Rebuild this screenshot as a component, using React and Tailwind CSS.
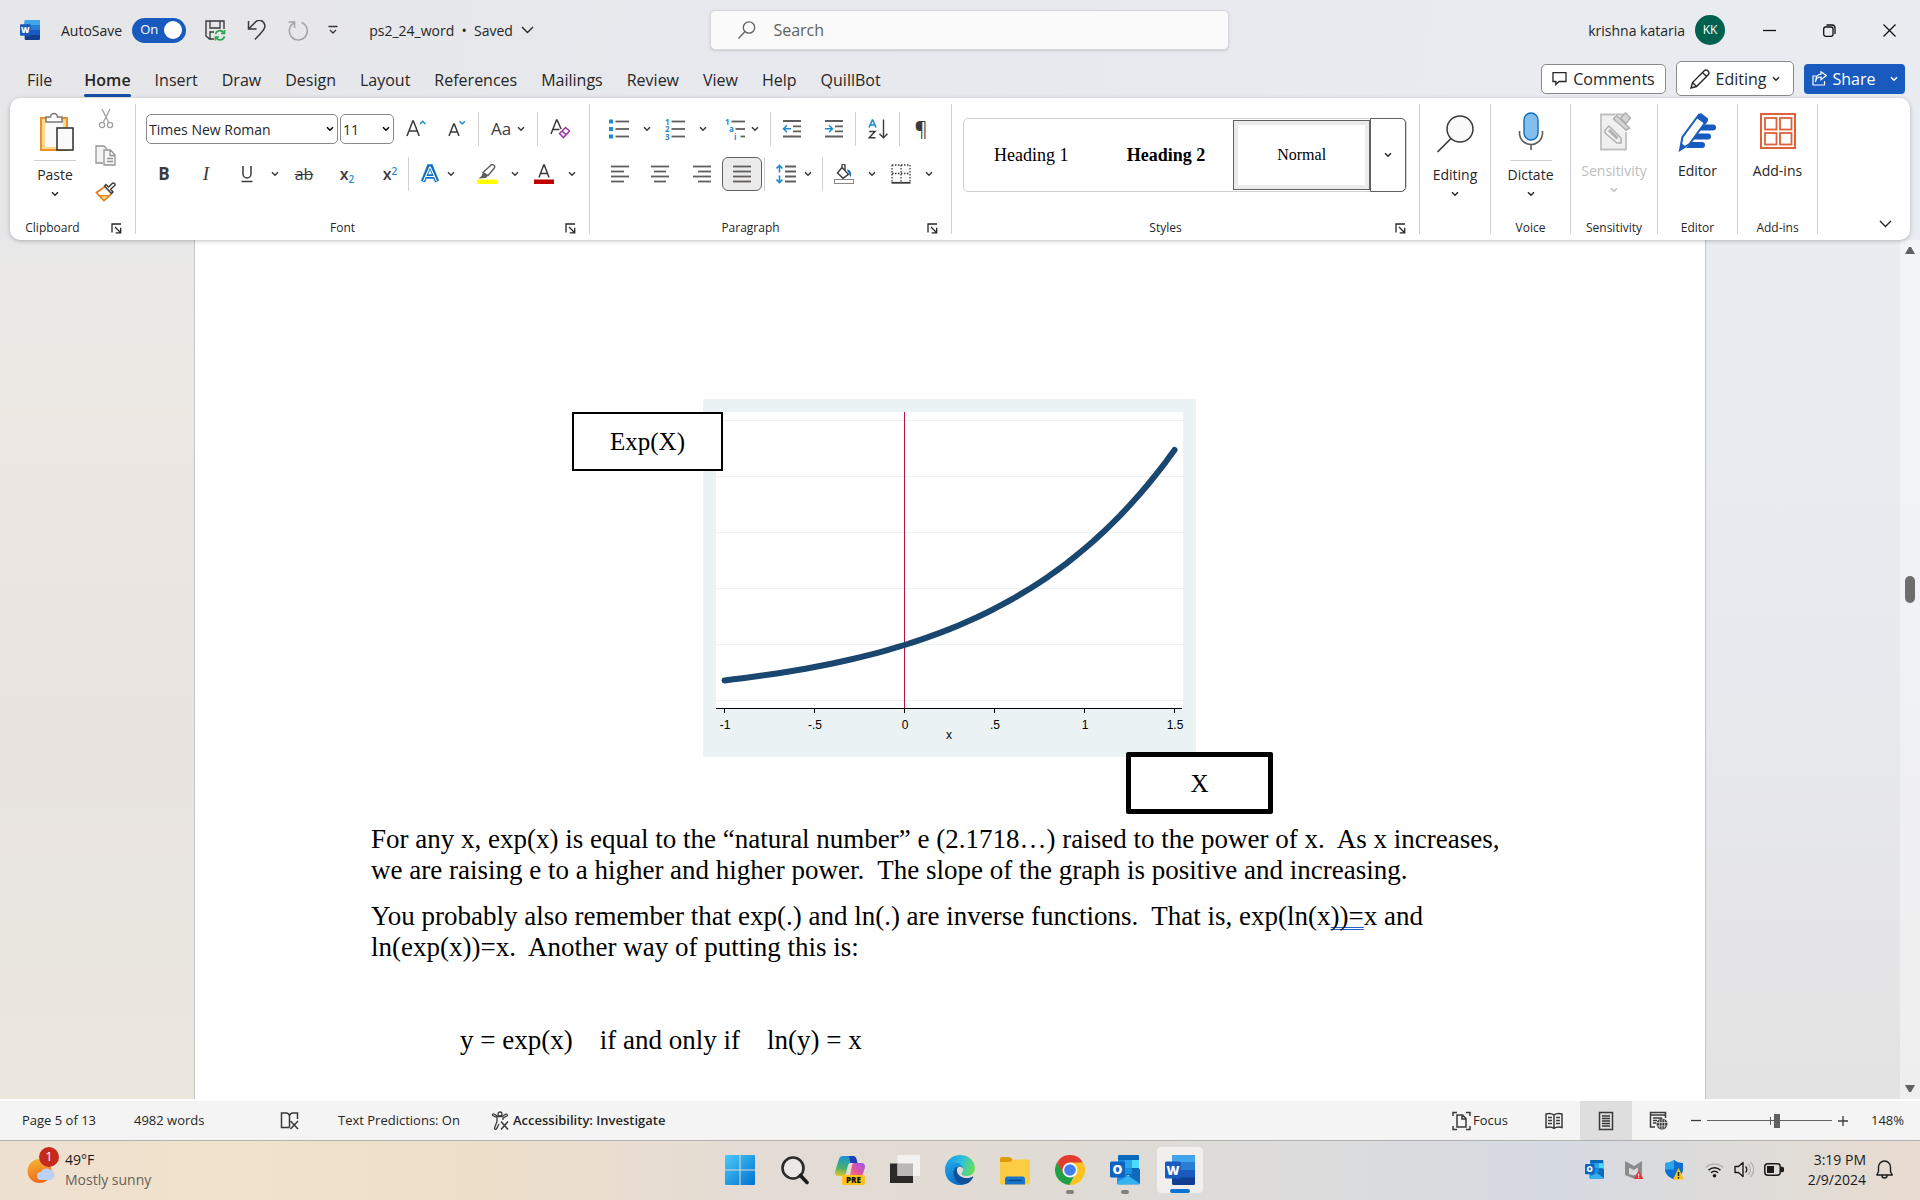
import clsx from "clsx";

const tabs = ["File", "Home", "Insert", "Draw", "Design", "Layout", "References", "Mailings", "Review", "View", "Help", "QuillBot"];

const ink = "#3b3a39";
const blue = "#1e8bcd";

function Svg({ w = 20, h = 20, box, children, className }) {
  return (
    <svg width={w} height={h} viewBox={box || `0 0 ${w} ${h}`} fill="none" className={clsx("shrink-0", className)} aria-hidden="true">
      {children}
    </svg>
  );
}

function Chevron({ className }) {
  return (
    <Svg w={8} h={6} className={className}>
      <path d="M1 1.2l3 3 3-3" stroke="currentColor" strokeWidth="1.5" />
    </Svg>
  );
}

function WideChevron() {
  return (
    <Svg w={13} h={8}>
      <path d="M1 1l5.5 5.5L12 1" stroke="currentColor" strokeWidth="1.4" />
    </Svg>
  );
}

function WordLogo({ size }) {
  return (
    <Svg w={size} h={size} box="0 0 30 30">
      <rect x="7" y="0" width="23" height="30" rx="1.5" fill="#103f91" />
      <rect x="7" y="15" width="23" height="7.5" fill="#185abd" />
      <rect x="7" y="7.5" width="23" height="7.5" fill="#2b7cd3" />
      <path d="M8.5 0h20A1.5 1.5 0 0 1 30 1.5V7.5H7V1.5A1.5 1.5 0 0 1 8.5 0z" fill="#41a5ee" />
      <rect x="0" y="6.5" width="16" height="17" rx="1.5" fill="#185abd" />
      <text x="8" y="19.5" textAnchor="middle" fontSize="12.5" fontWeight="800" fontFamily="Open Sans, sans-serif" fill="#fff">W</text>
    </Svg>
  );
}

function OutlookLogo({ size }) {
  return (
    <Svg w={size} h={size} box="0 0 30 30">
      <rect x="8" y="0" width="21" height="20" rx="1" fill="#0a68b8" />
      <rect x="8" y="5" width="7" height="8" fill="#1490df" />
      <rect x="15" y="5" width="7" height="8" fill="#28a8ea" />
      <rect x="22" y="5" width="7" height="8" fill="#50d9ff" />
      <rect x="15" y="13" width="7" height="6" fill="#1490df" />
      <path d="M7 14l11.5 7L30 14v14a1.5 1.5 0 0 1-1.5 1.5h-20A1.5 1.5 0 0 1 7 28z" fill="#1a93e0" />
      <path d="M18.5 21L30 14v14.5z" fill="#0f6cbd" />
      <path d="M7 27l11.5-6L30 28.8l-21 .7z" fill="#37b1ef" />
      <rect x="0" y="6.5" width="15" height="16" rx="1.5" fill="#0f63be" />
      <text x="7.5" y="19" textAnchor="middle" fontSize="12.5" fontWeight="800" fontFamily="Open Sans, sans-serif" fill="#fff">O</text>
    </Svg>
  );
}

function TitleBar() {
  return (
    <header className="grid h-[50px] grid-cols-[37fr_27fr_36fr] text-[#262626]">
      <div className="flex items-center pt-2.5 pl-5 text-[14px]">
        <WordLogo size={20} />
        <label className="ml-[21px] flex cursor-pointer items-center gap-2.5">
          AutoSave
          <input type="checkbox" role="switch" defaultChecked className="peer sr-only" />
          <span className="flex h-[25px] w-[54px] items-center justify-between rounded-full bg-[#185abd] pr-1 pl-2 text-[13px] text-white">
            On
            <span className="size-[18px] rounded-full bg-white" />
          </span>
        </label>
        <button type="button" aria-label="Save" className="ml-[19px]">
          <Svg w={21} h={21}>
            <path d="M9 19H4.5L1 16V1h18v8" stroke={ink} strokeWidth="1.4" />
            <path d="M5 1v7h10V1M5 19v-7h4" stroke={ink} strokeWidth="1.3" />
            <path d="M10.5 14a4.5 4.5 0 0 1 8-1.5M19.5 10v3.5H16M19.5 16.5a4.5 4.5 0 0 1-8 1.5M10.5 20.5V17H14" stroke="#2ea44a" strokeWidth="1.7" />
          </Svg>
        </button>
        <button type="button" aria-label="Undo" className="ml-[21px]">
          <Svg w={20} h={21}>
            <path d="M1.5 1v8h8M1.5 9l6-6a5.5 5.5 0 0 1 9.5 6c-.6 1.6-2 3-9 10.5" stroke={ink} strokeWidth="1.5" />
          </Svg>
        </button>
        <button type="button" aria-label="Redo" className="ml-5 text-[#a3a3a3]">
          <Svg w={22} h={21}>
            <path d="M14.5 2.5a9 9 0 1 1-7.5.5M7.500 8V2H1.500" stroke="currentColor" strokeWidth="1.5" />
          </Svg>
        </button>
        <button type="button" aria-label="Customize Quick Access Toolbar" className="ml-[19px]">
          <Svg w={10} h={10}>
            <path d="M.5 1.5h9M2 5l3 3 3-3" stroke={ink} strokeWidth="1.4" />
          </Svg>
        </button>
        <button type="button" className="ml-[31px] flex items-center gap-2 whitespace-pre">
          <span>ps2_24_word  •  Saved</span>
          <WideChevron />
        </button>
      </div>

      <label className="mt-2.5 flex h-10 items-center gap-4 rounded-[5px] border border-[#d5d7da] bg-[#fafafa] pl-[26px] shadow-sm">
        <Svg w={20} h={20}>
          <circle cx="12" cy="7.5" r="5.7" stroke="#616161" strokeWidth="1.3" />
          <path d="M8 11.5L1.5 18.5" stroke="#616161" strokeWidth="1.3" />
        </Svg>
        <input type="search" aria-label="Search" placeholder="Search" className="w-full bg-transparent pr-4 text-[16px] outline-none placeholder:text-[#616161]" />
      </label>

      <div className="flex items-center justify-end pt-2.5 pr-6 text-[14px]">
        <span>krishna kataria</span>
        <button type="button" aria-label="Account" className="ml-2.5 size-[30px] rounded-full bg-[#00614f] text-[12px] text-white">KK</button>
        <button type="button" aria-label="Minimize" className="ml-[38px]">
          <Svg w={13} h={13}><path d="M0 6.5h13" stroke="#111" strokeWidth="1.3" /></Svg>
        </button>
        <button type="button" aria-label="Restore" className="ml-[47px]">
          <Svg w={13} h={13}>
            <rect x=".7" y="3" width="9.3" height="9.3" rx="2" stroke="#111" strokeWidth="1.3" />
            <path d="M3.5 1h5.5a3 3 0 0 1 3 3v6" stroke="#111" strokeWidth="1.3" />
          </Svg>
        </button>
        <button type="button" aria-label="Close" className="ml-[47px]">
          <Svg w={13} h={13}><path d="M.5.5l12 12M12.5.5l-12 12" stroke="#111" strokeWidth="1.3" /></Svg>
        </button>
      </div>
    </header>
  );
}

function TabBar() {
  return (
    <nav className="flex h-12 items-center justify-between px-[15px] text-[16px] text-[#262626]">
      <div className="flex items-center pt-3.5">
        {tabs.map((tab) => (
          <a
            key={tab}
            href="#"
            className={clsx("flex flex-col px-3", tab === "File" && "mr-2", tab === "Home" && "font-semibold")}
          >
            <span className="leading-7">{tab}</span>
            <span className={clsx("h-[3px] rounded-full", tab === "Home" && "bg-[#174ea6]")} />
          </a>
        ))}
      </div>
      <div className="flex items-center gap-2.5 pt-[9px]">
        <button type="button" className="flex h-[30px] w-[125px] items-center justify-center gap-1.5 rounded-[5px] border border-[#8a8a8a] bg-white">
          <Svg w={15} h={15}>
            <path d="M1 1.7h13v8.8H7L3.8 13.5v-3H1z" stroke="#262626" strokeWidth="1.3" />
          </Svg>
          Comments
        </button>
        <button type="button" className="flex h-[35px] w-[118px] items-center justify-center gap-1.5 rounded-[5px] border border-[#8a8a8a] bg-white">
          <Svg w={20} h={20}>
            <path d="M1 19l1.500-5.500L14 2a2.500 2.500 0 0 1 4 4L6.500 17.500zM12.500 3.500l4 4M2.500 13.500l4 4" stroke="#262626" strokeWidth="1.4" />
          </Svg>
          Editing
          <Chevron />
        </button>
        <button type="button" className="flex h-[30px] w-[101px] items-center justify-center gap-1.5 rounded-[4px] bg-[#185abd] text-white">
          <Svg w={15} h={15}>
            <path d="M4 5H1v9h11.500v-4" stroke="#fff" strokeWidth="1.2" />
            <path d="M3.500 11c.5-3.500 2.500-5 5.500-5V8.800L14.300 4.500 9 .7v2.500C5.500 3.500 3.500 6.500 3.500 11z" stroke="#fff" strokeWidth="1.2" />
          </Svg>
          Share
          <Chevron className="ml-2" />
        </button>
      </div>
    </nav>
  );
}

function Group({ label, launcher, className, children }) {
  return (
    <section aria-label={label} className={clsx("flex flex-col justify-between border-r border-[#d1d1d1]", className)}>
      {children}
      <div className="flex h-3 items-center text-[12px] text-[#262626]">
        <span className={clsx("flex-1 text-center", launcher && "pr-4")}>{label}</span>
        {launcher && (
          <button type="button" aria-label={`${label} settings`} className="mr-[13px]">
            <Svg w={11} h={11}>
              <path d="M1 9.500V1h9M4 4l5 5M9.700 4.800v5h-5" stroke="#262626" strokeWidth="1.3" />
            </Svg>
          </button>
        )}
      </div>
    </section>
  );
}

function Tool({ label, className, menu, children }) {
  return (
    <button type="button" aria-label={label} className={clsx("flex h-[34px] items-center justify-center text-[#3b3a39]", className)}>
      {children}
      {menu && <Chevron />}
    </button>
  );
}

const Rule = ({ className }) => <span className={clsx("h-[34px] w-px bg-[#d1d1d1]", className)} />;

function Clipboard() {
  return (
    <Group label="Clipboard" launcher className="w-[126px]">
      <div className="flex">
        <button type="button" className="ml-6 flex w-[42px] flex-col items-center text-[14px] text-[#262626]">
          <Svg w={36} h={40} className="mt-2 ml-1">
            <path d="M2 6h26v32H2z" fill="#fbd88a" stroke="#e8912d" strokeWidth="2" />
            <path d="M6 9h18v26H6z" fill="#fafafa" />
            <path d="M7 10V5h4.500a3.500 3.500 0 0 1 7 0H23v5z" fill="#fff" stroke="#797774" strokeWidth="1.5" />
            <rect x="18" y="16" width="16" height="22" fill="#fafafa" stroke={ink} strokeWidth="1.6" />
          </Svg>
          <span className="mt-2 h-px w-full bg-[#d1d1d1]" />
          <span className="mt-1 leading-5">Paste</span>
          <Chevron className="mt-1.5" />
        </button>
        <div className="ml-[19px] flex flex-col gap-4 pt-1">
          <button type="button" aria-label="Cut">
            <Svg w={22} h={21}>
              <path d="M7 1l6.500 13M15 1L8.500 14" stroke="#a19f9d" strokeWidth="1.3" />
              <circle cx="7" cy="17" r="2.6" stroke="#a19f9d" strokeWidth="1.3" />
              <circle cx="15" cy="17" r="2.6" stroke="#a19f9d" strokeWidth="1.3" />
            </Svg>
          </button>
          <button type="button" aria-label="Copy">
            <Svg w={22} h={21}>
              <path d="M8 18H1V1h8l3 3" fill="#f3f3f3" stroke="#979593" strokeWidth="1.3" />
              <path d="M9 5h6.500l4.500 5v10H9zM15 5v5.500h5M12 13.500h6M12 16.500h6" fill="#f3f3f3" stroke="#979593" strokeWidth="1.3" />
            </Svg>
          </button>
          <button type="button" aria-label="Format Painter">
            <Svg w={22} h={20}>
              <path d="M1.500 10.500L10 4.500l6.500 7L9 18.500z" fill="#fff" stroke="#e07b12" strokeWidth="1.6" />
              <path d="M4 13.500l10.500.3L9 18.500z" fill="#fbd88a" stroke="#e07b12" strokeWidth="1.2" />
              <path d="M9.500 4l7 7.500 1.500-1.500-2.500-2.800L19.500 3.800a1.600 1.600 0 0 0-2.300-2.300L13.500 5 11 2.500z" fill="#fff" stroke={ink} strokeWidth="1.4" />
            </Svg>
          </button>
        </div>
      </div>
    </Group>
  );
}

function FontGroup() {
  return (
    <Group label="Font" launcher className="w-[454px]">
      <div className="flex flex-col gap-[11px] pt-2 pl-2.5">
        <div className="flex items-center">
          <div className="relative mr-0.5">
            <select aria-label="Font" className="h-[30px] w-48 appearance-none rounded-[5px] border border-[#8a8a8a] bg-white pl-0.5 text-[14px] text-[#262626]">
              <option>Times New Roman</option>
            </select>
            <Chevron className="pointer-events-none absolute top-3 right-1" />
          </div>
          <div className="relative mr-0.5">
            <select aria-label="Font size" className="h-[30px] w-[54px] appearance-none rounded-[5px] border border-[#8a8a8a] bg-white pl-0.5 text-[14px] text-[#262626]">
              <option>11</option>
            </select>
            <Chevron className="pointer-events-none absolute top-3 right-1" />
          </div>
          <Tool label="Increase font size" className="w-10">
            <Svg>
              <path d="M1 17L6.800 2h.6L13.200 17M3 12h8" stroke={ink} strokeWidth="1.5" />
              <path d="M14 5l2.700-2.700L19.400 5" stroke={blue} strokeWidth="1.5" />
            </Svg>
          </Tool>
          <Tool label="Decrease font size" className="w-[42px]">
            <Svg w={18}>
              <path d="M1 17L5.700 5h.6L11 17M2.800 13h6.400" stroke={ink} strokeWidth="1.5" />
              <path d="M11.500 2.300L14.200 5l2.700-2.700" stroke={blue} strokeWidth="1.5" />
            </Svg>
          </Tool>
          <Rule />
          <Tool label="Change case" menu className="w-[58px] gap-1.5">
            <span className="text-[17px]">Aa</span>
          </Tool>
          <Rule />
          <Tool label="Clear formatting" className="w-11">
            <Svg>
              <path d="M1 15L6.500 1h.6l4 9M3 10.500h6.500" stroke={ink} strokeWidth="1.5" />
              <path d="M9.500 14.500l6-6 4 3.500-6 6.500zM12 12l4 3.700" fill="#fff" stroke="#a33bb0" strokeWidth="1.6" />
            </Svg>
          </Tool>
        </div>
        <div className="flex items-center">
          <Tool label="Bold" className="w-9"><b className="text-[17px]">B</b></Tool>
          <Tool label="Italic" className="w-12"><i className="font-['Liberation_Serif',serif] text-[19px]">I</i></Tool>
          <Tool label="Underline" menu className="w-[60px] gap-[18px]">
            <Svg w={12} h={18}>
              <path d="M2 1v8a4 4 0 0 0 8 0V1M.5 16.500h11" stroke={ink} strokeWidth="1.5" />
            </Svg>
          </Tool>
          <Tool label="Strikethrough" className="w-7"><s className="text-[16px]">ab</s></Tool>
          <Tool label="Subscript" className="w-[58px]">
            <span className="text-[16px] font-semibold">x<sub className="text-[10px] text-[#1e8bcd]">2</sub></span>
          </Tool>
          <Tool label="Superscript" className="w-7">
            <span className="text-[16px] font-semibold">x<sup className="text-[10px] text-[#1e8bcd]">2</sup></span>
          </Tool>
          <Rule className="ml-1" />
          <Tool label="Text effects" menu className="w-14 gap-[7px]">
            <Svg>
              <path d="M3 17.500L9 2.500h2l6 15M5.500 12.500h9" stroke="#8cc4ec" strokeWidth="5" />
              <path d="M3 17.500L9 2.500h2l6 15M5.500 12.500h9" stroke="#0f6cbd" strokeWidth="3.8" />
              <path d="M3.500 17L9.700 3h.6l6.200 14M6 12.500h8" stroke="#fff" strokeWidth="1.1" />
            </Svg>
          </Tool>
          <Tool label="Highlight colour" menu className="w-[66px] gap-3.5">
            <Svg>
              <path d="M6 8.500l7.500-7a2 2 0 0 1 3.700 2.700L11 11.500z" stroke="#605e5c" strokeWidth="1.4" />
              <path d="M6 8.500l5 3-2 2.500-7.500.5 3-2.500z" fill="#605e5c" />
              <rect x="0" y="15.500" width="20" height="4.500" fill="#ffff00" />
            </Svg>
          </Tool>
          <Tool label="Font colour" menu className="w-12 gap-3.5">
            <Svg>
              <path d="M5 13.500L9.700 1h.6L15 13.500M6.700 9.500h6.600" stroke={ink} strokeWidth="1.5" />
              <rect x="0" y="15.500" width="20" height="4.500" fill="#c00000" />
            </Svg>
          </Tool>
        </div>
      </div>
    </Group>
  );
}

function AlignIcon({ lines }) {
  return (
    <Svg w={18} h={18}>
      {lines.map(([from, to], i) => (
        <path key={i} d={`M${from} ${1.5 + i * 5}H${to}`} stroke="#605e5c" strokeWidth="1.8" />
      ))}
    </Svg>
  );
}

function ListIcon({ marks, starts }) {
  return (
    <Svg w={20} h={28} box="0 -4 20 28">
      {starts.map((x, i) => (
        <path key={i} d={`M${x + 6.5} ${2.5 + i * 7.5}H20`} stroke="#605e5c" strokeWidth="1.8" />
      ))}
      {starts.map((x, i) =>
        marks ? (
          <text key={i} x={x} y={5.5 + i * 7.5} fontSize="8" fontWeight="700" fontFamily="Open Sans, sans-serif" fill={blue}>{marks[i]}</text>
        ) : (
          <rect key={i} x="0" y={0.5 + i * 7.5} width="4" height="4" fill={blue} />
        )
      )}
    </Svg>
  );
}

function Paragraph() {
  return (
    <Group label="Paragraph" launcher className="w-[362px]">
      <div className="flex flex-col gap-[11px] pt-2 pl-3">
        <div className="flex items-center">
          <Tool label="Bullets" menu className="w-14 gap-3.5"><ListIcon starts={[0, 0, 0]} /></Tool>
          <Tool label="Numbering" menu className="w-14 gap-3.5"><ListIcon starts={[0, 0, 0]} marks={["1", "2", "3"]} /></Tool>
          <Tool label="Multilevel list" menu className="w-14 gap-1.5"><ListIcon starts={[0, 4, 9]} marks={["1", "a", "i"]} /></Tool>
          <Rule />
          <Tool label="Decrease indent" className="w-[42px]">
            <Svg>
              <path d="M1 2h18M11 7.300h8M11 12.300h8M1 17.500h18" stroke="#605e5c" strokeWidth="1.8" />
              <path d="M9 9.800H1.500M5 6.300L1.500 9.800 5 13.300" stroke={blue} strokeWidth="1.5" />
            </Svg>
          </Tool>
          <Tool label="Increase indent" className="w-[42px]">
            <Svg>
              <path d="M1 2h18M11 7.300h8M11 12.300h8M1 17.500h18" stroke="#605e5c" strokeWidth="1.8" />
              <path d="M1 9.800h7.500M5 6.300l3.500 3.500L5 13.300" stroke={blue} strokeWidth="1.5" />
            </Svg>
          </Tool>
          <Rule />
          <Tool label="Sort" className="w-[43px]">
            <Svg>
              <path d="M1 8.500L4.300 1h.4L8 8.500M2.200 6h4.600" stroke={blue} strokeWidth="1.6" />
              <path d="M1.200 12.500H7l-5.800 6.300h6.300" stroke={ink} strokeWidth="1.5" />
              <path d="M15.500.5V19M11.500 14.800l4 4 4-4" stroke={ink} strokeWidth="1.4" />
            </Svg>
          </Tool>
          <Rule />
          <Tool label="Show paragraph marks" className="w-[42px]"><span className="text-[20px]">¶</span></Tool>
        </div>
        <div className="flex items-center">
          <Tool label="Align left" className="w-9"><AlignIcon lines={[[0, 18], [0, 13], [0, 18], [0, 13]]} /></Tool>
          <Tool label="Centre" className="w-11"><AlignIcon lines={[[0, 18], [3, 15], [0, 18], [3, 15]]} /></Tool>
          <Tool label="Align right" className="w-10"><AlignIcon lines={[[0, 18], [5, 18], [0, 18], [5, 18]]} /></Tool>
          <Tool label="Justify" className="w-10 rounded-[6px] border border-[#616161] bg-[#ebebeb]">
            <AlignIcon lines={[[0, 18], [0, 18], [0, 18], [0, 18]]} />
          </Tool>
          <Rule className="ml-0.5" />
          <Tool label="Line spacing" menu className="w-[57px] gap-2">
            <Svg>
              <path d="M9 2.500h11M9 7.500h11M9 12.500h11M9 17.500h11" stroke="#605e5c" strokeWidth="1.8" />
              <path d="M3.500 1.500v7M.5 4.500l3-3 3 3M3.500 11.500v7M.5 15.500l3 3 3-3" stroke={blue} strokeWidth="1.6" />
            </Svg>
          </Tool>
          <Rule />
          <Tool label="Shading" menu className="w-16 gap-3.5">
            <Svg>
              <path d="M8 3.500l6.500 6.800-5.500 4L3.500 9zM8 5V1.500A1.500 1.500 0 0 1 11 1.500V6" stroke={ink} strokeWidth="1.4" />
              <path d="M13 5.500c3 0 4.500 2 4 7.500-1.800-1-1.300-4-3-5z" fill="#0f6cbd" />
              <rect x=".5" y="15.500" width="19" height="4" fill="#fff" stroke="#8a8886" />
            </Svg>
          </Tool>
          <Tool label="Borders" menu className="w-[50px] gap-3.5">
            <Svg>
              <path d="M1 1h18M1 9.500h18M1 1v17M10 1v17M19 1v17" stroke={ink} strokeWidth="1.3" strokeDasharray="1.5 1.5" />
              <path d="M.5 18.800h19" stroke={ink} strokeWidth="1.8" />
            </Svg>
          </Tool>
        </div>
      </div>
    </Group>
  );
}

function Styles() {
  return (
    <Group label="Styles" launcher className="min-w-[440px] flex-1">
      <div className="pt-3.5 pr-3 pl-[11px]">
        <div className="flex h-[74px] rounded-[5px] border border-[#d1d1d1] font-['Liberation_Serif',serif] text-black">
          <button type="button" className="flex-1 text-[18px]">Heading 1</button>
          <button type="button" className="flex-1 text-[18px] font-bold">Heading 2</button>
          <button type="button" className="my-px flex-1 border border-[#616161] text-[16px] ring-4 ring-[#ebebeb] ring-inset">Normal</button>
          <button type="button" aria-label="More styles" className="-my-px flex w-9 items-center justify-center rounded-r-[5px] border border-[#616161] text-[#262626]">
            <Chevron />
          </button>
        </div>
      </div>
    </Group>
  );
}

function BigTool({ label, menu, split, disabled, icon }) {
  return (
    <button type="button" disabled={disabled} className={clsx("flex flex-col items-center text-[14px]", disabled ? "text-[#bdbdbd]" : "text-[#262626]")}>
      <span className="mt-2 flex h-10 items-center">{icon}</span>
      {split && <span className="mt-2 h-px w-[42px] bg-[#d1d1d1]" />}
      <span className={clsx("leading-5", split ? "mt-1" : menu && !disabled ? "mt-[13px]" : "mt-[9px]")}>{label}</span>
      {menu && <Chevron className="mt-1.5" />}
    </button>
  );
}

function Ribbon() {
  return (
    <div className="relative z-10 mx-2.5 flex h-[142px] rounded-[10px] bg-white py-1.5 shadow-[0_1px_4px_rgba(0,0,0,0.25)]">
      <Clipboard />
      <FontGroup />
      <Paragraph />
      <Styles />
      <Group className="w-[71px]">
        <BigTool
          label="Editing"
          menu
          icon={
            <Svg w={38} h={38} className="mt-1">
              <circle cx="24" cy="14" r="13" fill="#fafafa" stroke={ink} strokeWidth="1.5" />
              <path d="M15 23.500L1.500 37" stroke={ink} strokeWidth="1.7" />
            </Svg>
          }
        />
      </Group>
      <Group label="Voice" className="w-[80px]">
        <BigTool
          label="Dictate"
          menu
          split
          icon={
            <Svg w={26} h={40}>
              <rect x="6" y="1" width="14" height="27" rx="7" fill="#83beec" stroke="#0f6cbd" strokeWidth="1.4" />
              <path d="M1.500 19v2a11.500 11.500 0 0 0 23 0v-2M13 32.500V38" stroke="#605e5c" strokeWidth="1.6" />
            </Svg>
          }
        />
      </Group>
      <Group label="Sensitivity" className="w-[87px]">
        <BigTool
          label="Sensitivity"
          menu
          disabled
          icon={
            <Svg w={36} h={40}>
              <path d="M5 2.500h25v35H5z" fill="#f0f0f0" stroke="#c0c0c0" strokeWidth="1.8" />
              <path d="M9 18l4-4 12 12v5h-4L9 21z" fill="#f0f0f0" stroke="#b0b0b0" strokeWidth="1.5" />
              <path d="M13 18l8.500 8.500" stroke="#b0b0b0" strokeWidth="3" />
              <path d="M16 6l3.500-3L35 16l-5 4z" fill="#d6d6d6" stroke="#fff" strokeWidth="1" />
              <path d="M17.500 7l3-3.500L33.500 16 30 18zM24.500 6l5-5 5 5-4.500 5.500z" fill="#d6d6d6" stroke="#b0b0b0" strokeWidth="1.5" />
            </Svg>
          }
        />
      </Group>
      <Group label="Editor" className="w-[80px]">
        <BigTool
          label="Editor"
          icon={
            <Svg w={40} h={40}>
              <path d="M24 12.500h11a3 3 0 0 1 0 6H20zM20 21.500h10a3 3 0 0 1 0 6H15zM14 30h10a3 3 0 0 1 0 6H8z" fill="#185abd" />
              <path d="M2 38l2.500-13L21 2.500l8 5.500L11.500 32z" fill="#fff" stroke="#185abd" strokeWidth="2" />
              <path d="M21 2.500l2-1.500 7 5.500-.5 3-2 3L18.500 6zM2 38l1.300-7 4 3.200z" fill="#185abd" />
            </Svg>
          }
        />
      </Group>
      <Group label="Add-ins" className="w-[80px]">
        <BigTool
          label="Add-ins"
          icon={
            <Svg w={36} h={38}>
              <rect x="1" y="1" width="34" height="34" stroke="#e0603a" strokeWidth="2" />
              {[[5, 5], [20, 5], [5, 20], [20, 20]].map(([x, y]) => (
                <rect key={`${x}-${y}`} x={x} y={y} width="11.5" height="11.5" stroke="#e0603a" strokeWidth="1.8" />
              ))}
            </Svg>
          }
        />
      </Group>
      <div className="flex w-[92px] items-end justify-end pr-[18px] pb-1.5 text-[#262626]">
        <button type="button" aria-label="Collapse ribbon"><WideChevron /></button>
      </div>
    </div>
  );
}

// Axis scale: x = -1 at 22px, 180px per unit; y = 0 at 302px, 56px per unit
function curve() {
  const points = [];
  for (let x = -1; x <= 1.5001; x += 0.05) {
    points.push(`${(201.5 + x * 180).toFixed(1)},${(302 - Math.exp(x) * 56).toFixed(1)}`);
  }
  return points.join(" ");
}

const ticks = [
  ["-1", 22],
  ["-.5", 112],
  ["0", 202],
  [".5", 292],
  ["1", 382],
  ["1.5", 472],
];

function Chart() {
  return (
    <figure className="relative mx-auto h-[358px] w-[494px]">
      <svg width="494" height="358" viewBox="0 0 494 358" fill="none" role="img" aria-label="Graph of exp(x)">
        <rect width="493" height="358" fill="#eaf2f4" />
        <rect x="13" y="13" width="467" height="297" fill="#fff" />
        {[21, 77, 133, 189, 245, 301].map((y) => (
          <path key={y} d={`M13 ${y + 0.5}H480`} stroke="#eaf2f4" />
        ))}
        <path d="M201.500 13v296" stroke="#b8143f" />
        <polyline points={curve()} stroke="#1a476f" strokeWidth="6" strokeLinecap="round" strokeLinejoin="round" />
        <path d="M13 309.500h466" stroke="#000" />
        {ticks.map(([label, x]) => (
          <g key={label}>
            <path d={`M${x - 0.5} 309v5`} stroke="#000" />
            <text x={x} y="330" textAnchor="middle" fontSize="12" fontFamily="Liberation Sans, Arial, sans-serif" fill="#000">{label}</text>
          </g>
        ))}
        <text x="246" y="340" textAnchor="middle" fontSize="12" fontFamily="Liberation Sans, Arial, sans-serif" fill="#000">x</text>
      </svg>
      <div className="absolute top-[13px] -left-[131px] flex h-[59px] w-[151px] items-center justify-center border-2 border-black bg-white text-[25px]">
        Exp(X)
      </div>
      <div className="absolute top-[353px] left-[423px] flex h-[62px] w-[147px] items-center justify-center rounded-[2px] border-[5px] border-black bg-white text-[25px]">
        X
      </div>
    </figure>
  );
}

function Document() {
  return (
    <div className="flex min-h-0 flex-1 bg-[linear-gradient(#e8e8e8,#ece7e1_20%,#e9e4e0_60%,#ebe7df),linear-gradient(#e9edf2,#e8e9ee_50%,#e3e3e3)] bg-[length:50%_100%] bg-[position:left,right] bg-no-repeat">
      <div className="flex min-w-0 flex-1 overflow-hidden">
        <article className="mx-auto w-full max-w-[1512px] border-x border-[#c6c6c6] bg-white px-[176px] pt-[159px] font-['Liberation_Serif','Times_New_Roman',serif] text-[27px] leading-[31px] text-black">
          <Chart />
          <p className="mt-[67px]">
            For any x, exp(x) is equal to the “natural number” e (2.1718…) raised to the power of x.&nbsp; As x increases,
            we are raising e to a higher and higher power.&nbsp; The slope of the graph is positive and increasing.
          </p>
          <p className="mt-[15px]">
            You probably also remember that exp(.) and ln(.) are inverse functions.&nbsp; That is, exp(ln(x
            <span className="underline decoration-[#2b5fd0] decoration-double decoration-1 underline-offset-2 [text-decoration-skip-ink:none]">))=</span>
            x and ln(exp(x))=x.&nbsp; Another way of putting this is:
          </p>
          <p className="mt-[62px] pl-[89px] whitespace-pre">y = exp(x)    if and only if    ln(y) = x</p>
        </article>
      </div>
      <div className="flex w-5 flex-col items-center bg-white/40 py-1.5">
        <Svg w={10} h={8}><path d="M0 8L4 1h2l4 7z" fill="#616161" /></Svg>
        <span className="grow-2" />
        <span className="h-[27px] w-2.5 rounded-full bg-[#6e6e6e]" />
        <span className="grow-3" />
        <Svg w={10} h={8}><path d="M0 0l4 7h2l4-7z" fill="#616161" /></Svg>
      </div>
    </div>
  );
}

function StatusBar() {
  return (
    <footer className="flex h-[42px] items-center justify-between border-t-2 border-b border-t-white border-b-[#b4b2b0] bg-[#f4f4f4] pr-4 pl-[22px] text-[13px] text-[#262626]">
      <div className="flex items-center">
        <button type="button" className="w-28 text-left">Page 5 of 13</button>
        <button type="button" className="w-[146px] text-left">4982 words</button>
        <button type="button" aria-label="Proofing errors" className="w-[58px]">
          <Svg w={20} h={20}>
            <path d="M9.500 16.500H1.500V2H6a3.500 3.500 0 0 1 3.500 3V16.500M9.500 5A3.500 3.500 0 0 1 13 2h4.500v6" stroke={ink} strokeWidth="1.5" />
            <path d="M10.500 10l7.500 8M18 10l-7.500 8" stroke={ink} strokeWidth="1.5" />
          </Svg>
        </button>
        <button type="button" className="w-[153px] text-left">Text Predictions: On</button>
        <button type="button" className="flex items-center gap-0.5 font-semibold">
          <Svg w={20} h={20}>
            <circle cx="9" cy="3" r="2" stroke={ink} strokeWidth="1.3" />
            <path d="M1.500 4.500l4.500 2v4L3.500 17c0 1.500 1.500 1.800 2.200.5L8 13M1.500 4.500C1 3 2.500 2.500 3.500 3.300L7 5.500h4l3.500-2.200c1.500-.6 2.500.7 1.500 1.700l-4 2v2" stroke={ink} strokeWidth="1.3" />
            <path d="M10 10.500l7 8M17 10.500l-7 8" stroke={ink} strokeWidth="1.5" />
          </Svg>
          Accessibility: Investigate
        </button>
      </div>
      <div className="flex h-full items-center">
        <button type="button" className="flex items-center gap-0.5">
          <Svg w={19} h={20}>
            <path d="M1 5V1.500h4M14 1.500h4V5M18 15v3.500h-4M5 18.500H1V15" stroke={ink} strokeWidth="1.5" />
            <path d="M5 4h5.500L14 7.500V16H5zM10 4v4h4" stroke={ink} strokeWidth="1.5" />
          </Svg>
          Focus
        </button>
        <button type="button" aria-label="Read mode" className="ml-5 flex h-full w-[52px] items-center justify-center">
          <Svg w={18} h={18}>
            <path d="M9 3v13M9 3C7 1.500 3 1.500 1 2v13.500c2-.6 6-.6 8 .8 2-1.400 6-1.400 8-.8V2c-2-.5-6-.5-8 1z" stroke={ink} strokeWidth="1.5" />
            <path d="M3 5.500h4M3 8.500h4M3 11.500h4M11 5.500h4M11 8.500h4M11 11.500h4" stroke={ink} strokeWidth="1.5" />
          </Svg>
        </button>
        <button type="button" aria-label="Print layout" className="flex h-full w-[52px] items-center justify-center bg-[#dedede]">
          <Svg w={16} h={20}>
            <path d="M1.500 1.500h13v17h-13z" stroke={ink} strokeWidth="1.5" />
            <path d="M4 5h8M4 7.500h8M4 10h8M4 12.500h8M4 15h8" stroke={ink} strokeWidth="1.3" />
          </Svg>
        </button>
        <button type="button" aria-label="Web layout" className="flex h-full w-[52px] items-center justify-center">
          <Svg w={19} h={19}>
            <path d="M6 16H1.500V1.500h15V7M1.500 4h15M4 7h9M4 9.500h4M4 12h3" stroke={ink} strokeWidth="1.5" />
            <circle cx="13" cy="13" r="5.5" fill={ink} />
            <path d="M8 11.500h10M8 15h10M13 8v10M11 8.500c-1 3-1 6 0 9M15 8.500c1 3 1 6 0 9" stroke="#f4f4f4" strokeWidth=".7" />
          </Svg>
        </button>
        <button type="button" aria-label="Zoom out" className="ml-[7px]">
          <Svg w={10} h={10}><path d="M0 4.500h10" stroke={ink} strokeWidth="1.3" /></Svg>
        </button>
        <div className="relative mx-1.5 flex items-center">
          <input
            type="range"
            aria-label="Zoom"
            min="0"
            max="100"
            defaultValue="56"
            className="h-4 w-[125px] appearance-none bg-[linear-gradient(#616161,#616161)] bg-[length:100%_1px] bg-center bg-no-repeat [&::-webkit-slider-thumb]:h-3.5 [&::-webkit-slider-thumb]:w-1.5 [&::-webkit-slider-thumb]:appearance-none [&::-webkit-slider-thumb]:bg-[#616161]"
          />
          <span className="pointer-events-none absolute top-1 left-1/2 h-2 w-px bg-[#616161]" />
        </div>
        <button type="button" aria-label="Zoom in">
          <Svg w={10} h={10}><path d="M0 5h10M5 0v10" stroke={ink} strokeWidth="1.3" /></Svg>
        </button>
        <button type="button" className="w-14 text-right">148%</button>
      </div>
    </footer>
  );
}

function EdgeLogo() {
  return (
    <Svg w={30} h={30}>
      <defs>
        <linearGradient id="edgeTop" x1="2" y1="6" x2="29" y2="16" gradientUnits="userSpaceOnUse">
          <stop stopColor="#1c9fe8" />
          <stop offset=".5" stopColor="#2fc2d8" />
          <stop offset="1" stopColor="#6be04d" />
        </linearGradient>
        <linearGradient id="edgeBody" x1="5" y1="10" x2="16" y2="30" gradientUnits="userSpaceOnUse">
          <stop stopColor="#1b9de2" />
          <stop offset="1" stopColor="#0868c4" />
        </linearGradient>
      </defs>
      <path d="M0 14C.7 6 7 0 15 0c9 0 15 6.500 15 13 0 5-3.500 8-8 8-4 0-5.500-1.500-5.500-2.500 0-.8 1.700-1.300 1.700-3.800 0-3.500-3.500-6.200-8-6.200C5.500 8.500 2 10.500 0 14z" fill="url(#edgeTop)" />
      <path d="M0 15c0-4 4-7.500 9.500-7.500 5 0 8.700 3 8.700 6.500 0 0-1.200-2.200-3.700-2.200-3 0-4.500 3-4.500 6 0 6 5 11.200 10 11.200-1.500.7-3 1-5 1C6.500 30 0 23.500 0 15z" fill="url(#edgeBody)" />
      <path d="M8.500 17.500c0-3 2-5.700 5-5.700-1.500 1-2 2.700-1.500 4.700 1 4 5 6.500 9.500 6.500 2.500 0 4.500-.5 6-1.500.5-.3.900.1.700.5C26.500 26 23 29 19.500 29.200 13 29.500 8.500 24 8.500 17.500z" fill="#10509a" />
    </Svg>
  );
}

function TaskbarApps() {
  return (
    <div className="flex items-center gap-[7px]">
      <button type="button" aria-label="Start" className="flex w-12 justify-center">
        <Svg w={30} h={30}>
          <defs>
            <linearGradient id="win" x1="0" y1="0" x2="30" y2="30" gradientUnits="userSpaceOnUse">
              <stop stopColor="#4cc9fb" />
              <stop offset="1" stopColor="#0072d0" />
            </linearGradient>
          </defs>
          <path d="M1 0h13.500v14.500H0V1a1 1 0 0 1 1-1zM15.500 0H29a1 1 0 0 1 1 1v13.500H15.500zM0 15.500h14.500V30H1a1 1 0 0 1-1-1zM15.500 15.500H30V29a1 1 0 0 1-1 1H15.500z" fill="url(#win)" />
        </Svg>
      </button>
      <button type="button" aria-label="Search" className="flex w-12 justify-center">
        <Svg w={28} h={30}>
          <circle cx="12" cy="13" r="10.5" fill="#fff" fillOpacity=".35" stroke="#2b2b2b" strokeWidth="2.6" />
          <path d="M19.500 20.500l6.500 7" stroke="#1c1c1c" strokeWidth="3.6" strokeLinecap="round" />
        </Svg>
      </button>
      <button type="button" aria-label="Copilot" className="flex w-12 justify-center">
        <Svg w={30} h={30}>
          <defs>
            <linearGradient id="copA" x1="6" y1="0" x2="3" y2="21" gradientUnits="userSpaceOnUse">
              <stop stopColor="#1a8fe0" />
              <stop offset=".6" stopColor="#48b06a" />
              <stop offset="1" stopColor="#e6c62a" />
            </linearGradient>
            <linearGradient id="copB" x1="27" y1="8" x2="14" y2="24" gradientUnits="userSpaceOnUse">
              <stop stopColor="#a455e8" />
              <stop offset=".5" stopColor="#e8559a" />
              <stop offset="1" stopColor="#f59b55" />
            </linearGradient>
          </defs>
          <path d="M8 1h10c3 0 3.500 3 4.500 7h-7c-2 0-2.500 2-3 4l-1.500 6c-.6 2-1.500 3-3.500 3H3c-3 0-3.500-3-2.500-6L4 4c.6-2 2-3 4-3z" fill="url(#copA)" />
          <path d="M14 1h4c3 0 3.500 3 4.500 7h-7z" fill="#1d3fb5" />
          <path d="M18.500 8H27c3 0 3.500 3 2.500 6l-2 6c-.6 2-2 3-4 3H11.500c2 0 3-1 3.500-3l2-9c.4-2 .5-3 1.500-3z" fill="url(#copB)" />
          <rect x="7" y="20" width="23" height="10" rx="2" fill="#fcc419" />
          <text x="18.500" y="28" textAnchor="middle" fontSize="8" fontWeight="800" fontFamily="Open Sans, sans-serif" fill="#111">PRE</text>
        </Svg>
      </button>
      <button type="button" aria-label="Task view" className="flex w-12 justify-center">
        <Svg w={30} h={30}>
          <path d="M0 8.500h23V28H0z" fill="#2b2a29" />
          <path d="M7.500 0H30v21H7.500z" fill="#f4f4f4" fillOpacity=".9" />
          <path d="M7.500 8.500H23V21H7.500z" fill="#b9b8b7" />
        </Svg>
      </button>
      <button type="button" aria-label="Edge" className="flex w-12 justify-center"><EdgeLogo /></button>
      <button type="button" aria-label="File Explorer" className="flex w-12 justify-center">
        <Svg w={30} h={30}>
          <path d="M0 3.500A1.500 1.500 0 0 1 1.500 2H10l3 3-3 3H0z" fill="#dd9d0b" />
          <path d="M0 7h10l3.500-2.500H28.500A1.500 1.500 0 0 1 30 6v22a1.500 1.500 0 0 1-1.500 1.500h-27A1.500 1.500 0 0 1 0 28z" fill="#fccc45" />
          <path d="M5 29.500V24a2.500 2.500 0 0 1 2.500-2.500h15A2.500 2.500 0 0 1 25 24v5.500z" fill="#1577cc" />
          <path d="M8.500 25.500h13" stroke="#0b4b86" strokeWidth="1.5" />
        </Svg>
      </button>
      <button type="button" aria-label="Chrome" className="relative flex w-12 justify-center">
        <Svg w={30} h={30}>
          <path d="M2 7.500A15 15 0 0 1 28 7.500L15 9z" fill="#e33b2e" />
          <path d="M2 7.500A15 15 0 0 0 14.500 30l6-11.500H9z" fill="#22a045" />
          <path d="M28 7.500A15 15 0 0 1 14.500 30L21.500 18.500 15 7.500z" fill="#fcc31e" />
          <path d="M2 7.500L8.500 19 15 7.500z" fill="#e33b2e" />
          <path d="M2 7.500l6.500 11.500-3 3z" fill="#22a045" />
          <circle cx="15" cy="15" r="7.5" fill="#fff" />
          <circle cx="15" cy="15" r="5.8" fill="#3f7ff0" />
        </Svg>
        <span className="absolute top-[35px] h-1 w-2 rounded-full bg-[#84807c]" />
      </button>
      <button type="button" aria-label="Outlook" className="relative flex w-12 justify-center">
        <OutlookLogo size={30} />
        <span className="absolute top-[35px] h-1 w-2 rounded-full bg-[#84807c]" />
      </button>
      <button type="button" aria-label="Word" className="relative flex size-12 items-center justify-center rounded-[5px] border border-[#dcdcdc] bg-[#f0efee]">
        <WordLogo size={30} />
        <span className="absolute bottom-0 h-1 w-5 rounded-full bg-[#0a74d6]" />
      </button>
    </div>
  );
}

function Tray() {
  return (
    <div className="flex items-center justify-end pr-[27px] text-[#1a1a1a]">
      <div className="flex items-center gap-[21px]">
        <OutlookLogo size={19} />
        <Svg w={19} h={20}>
          <path d="M0 1l9 5 8-5v14l-8.500 3.500L0 15z" fill="#8b8b8b" />
          <path d="M4 7.500l4.700 2.500L13 7.500V14l-4.500 1.500L4 14z" fill="#d9dade" />
          <path d="M13.500 10.500l5 8.500h-9.500z" fill="#ea3434" />
          <path d="M13.700 13.500v3M13.700 17v1" stroke="#fff" />
        </Svg>
        <Svg w={19} h={20}>
          <path d="M9 0c2.500 2 5.500 3 9 3v6c0 5-3.500 8-9 10.500C3.500 17 0 14 0 9V3c3.500 0 6.500-1 9-3z" fill="#0f6fd0" />
          <path d="M9 0v9.500H0V3c3.500 0 6.500-1 9-3z" fill="#28a8ea" />
          <path d="M13.500 8L19 19.500H8z" fill="#fcc419" />
          <path d="M13.500 12v4M13.500 17v1.500" stroke="#222" strokeWidth="1.5" />
        </Svg>
        <Svg w={19} h={19}>
          <path d="M.8 7.500a12.500 12.500 0 0 1 17.400 0" stroke="#b5b3b0" strokeWidth="1.4" />
          <path d="M3.500 10.200a8.500 8.500 0 0 1 12 0M6 12.800a5 5 0 0 1 7 0" stroke="currentColor" strokeWidth="1.5" />
          <circle cx="9.5" cy="15.8" r="1.8" fill="currentColor" />
        </Svg>
      </div>
      <Svg w={20} h={19} className="ml-2.5">
        <path d="M1 6.500h3.500L9 2.500v14l-4.500-4H1z" stroke="currentColor" strokeWidth="1.4" strokeLinejoin="round" />
        <path d="M11.500 6.500a4 4 0 0 1 0 6" stroke="currentColor" strokeWidth="1.3" />
        <path d="M14 4a7.500 7.500 0 0 1 0 11M16.500 2a10.500 10.500 0 0 1 0 15" stroke="#b5b3b0" strokeWidth="1.3" />
      </Svg>
      <Svg w={20} h={13} className="ml-2.5">
        <rect x=".8" y=".8" width="15.4" height="11.4" rx="3" stroke="currentColor" strokeWidth="1.5" />
        <rect x="3" y="3" width="7" height="7" fill="currentColor" />
        <path d="M17.500 4v5a2.500 2.500 0 0 0 0-5z" fill="currentColor" stroke="currentColor" />
      </Svg>
      <time className="w-[82px] text-right text-[14px] leading-5">
        3:19 PM
        <br />
        2/9/2024
      </time>
      <Svg w={17} h={19} className="ml-2.5">
        <path d="M8.500 1a6 6 0 0 1 6 6v4.500l1.700 3.500H.8l1.700-3.500V7a6 6 0 0 1 6-6zM6 15.500a2.500 2.500 0 0 0 5 0" stroke="currentColor" strokeWidth="1.4" strokeLinejoin="round" />
      </Svg>
    </div>
  );
}

function Taskbar() {
  return (
    <div className="grid h-[59px] grid-cols-[1fr_auto_1fr] items-center bg-[linear-gradient(90deg,#eee0d0_0%,#f1e2cb_12%,#eedfcb_26%,#e4dcd4_38%,#e0dbd4_55%,#dcdcdc_68%,#d6dae2_81%,#dedcd8_91%,#e8dbd0_100%)] pb-0.5">
      <button type="button" className="flex items-center gap-1.5 pl-[27px] text-left">
        <span className="relative mb-1 flex h-[34px] w-8 items-end">
          <Svg w={32} h={32}>
            <defs>
              <linearGradient id="sun" x1="8" y1="4" x2="14" y2="28" gradientUnits="userSpaceOnUse">
                <stop stopColor="#f6b93b" />
                <stop offset="1" stopColor="#f26a16" />
              </linearGradient>
            </defs>
            <circle cx="12.5" cy="18" r="12" fill="url(#sun)" />
            <path d="M14 27a4 4 0 0 1 0-8 6 6 0 0 1 10-1.500 5 5 0 0 1 0 9.500z" fill="#bcd2f5" />
          </Svg>
          <span className="absolute -top-1 right-0 flex size-5 items-center justify-center rounded-full bg-[#c42b1c] text-[13px] text-white">1</span>
        </span>
        <span className="text-[14px] leading-5 text-[#1a1a1a]">
          49°F
          <br />
          <span className="text-[#66615b]">Mostly sunny</span>
        </span>
      </button>
      <TaskbarApps />
      <Tray />
    </div>
  );
}

export default function App() {
  return (
    <div className="flex h-screen flex-col overflow-hidden bg-[linear-gradient(100deg,#e7e6e8_0%,#e6e8ed_30%,#e9ebf0_75%,#e9ecf1_100%)] font-['Open_Sans','Noto_Sans',sans-serif]">
      <TitleBar />
      <TabBar />
      <Ribbon />
      <Document />
      <StatusBar />
      <Taskbar />
    </div>
  );
}
